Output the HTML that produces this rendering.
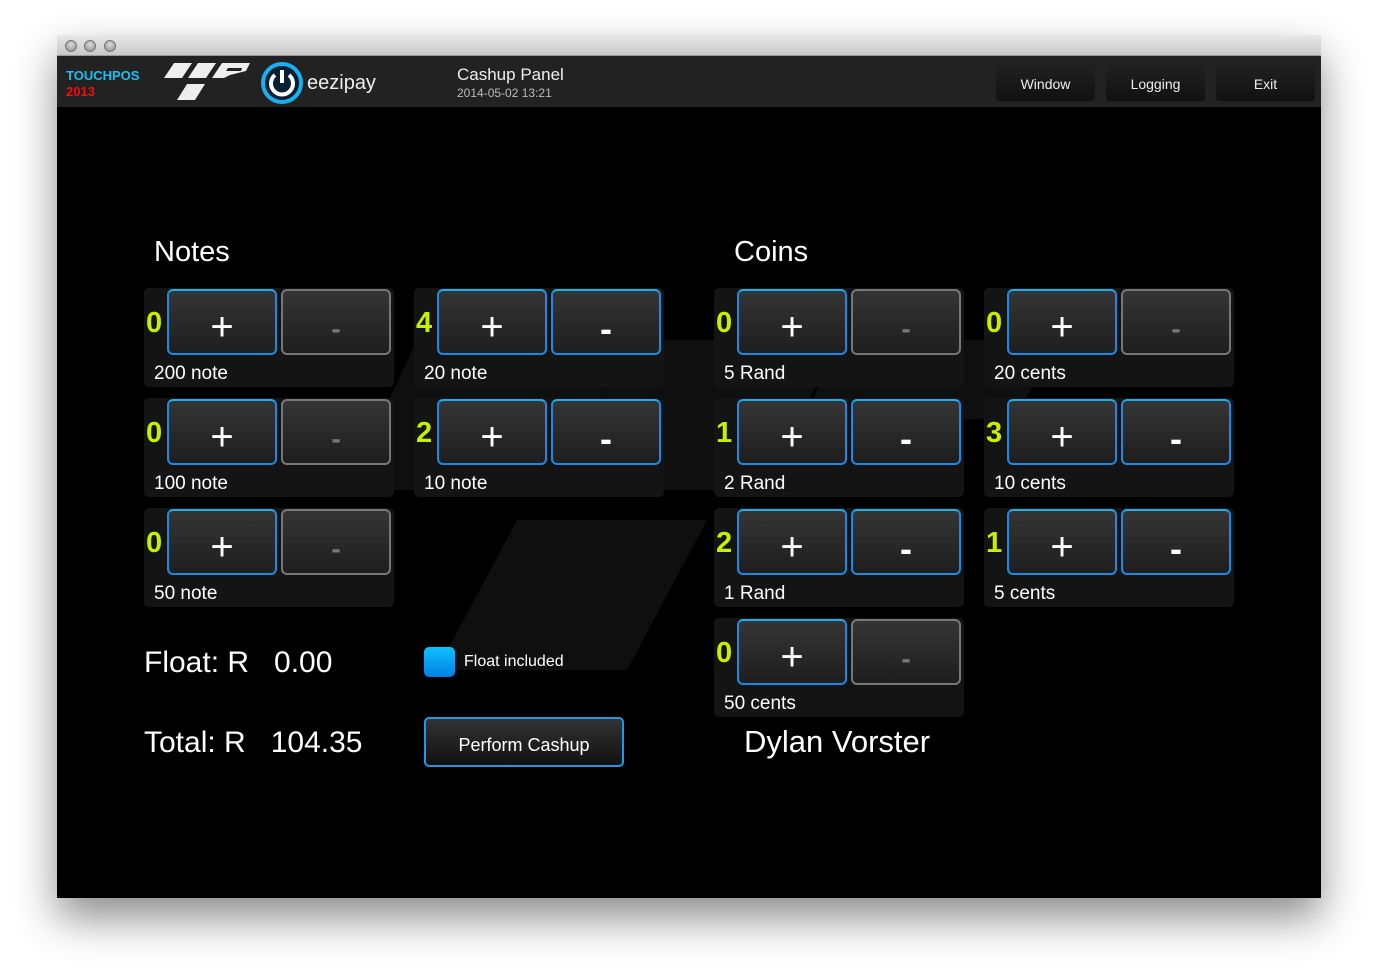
<!DOCTYPE html>
<html><head><meta charset="utf-8"><style>
*{box-sizing:border-box;margin:0;padding:0}
body{width:1378px;height:977px;background:#fff;position:relative;overflow:hidden;font-family:"Liberation Sans",sans-serif;color:#fff}
.win{position:absolute;left:57px;top:35px;width:1264px;height:863px;background:#000;box-shadow:0 20px 40px rgba(0,0,0,.45);overflow:hidden}
.tb{position:absolute;left:0;top:0;width:100%;height:21px;background:linear-gradient(#e8e8e8,#c8c8c8);border-bottom:1px solid #999}
.dot{position:absolute;top:5px;width:12px;height:12px;border-radius:50%;background:radial-gradient(circle at 50% 35%,#ddd,#888);border:1px solid #777}
.hd{position:absolute;left:0;top:21px;width:100%;height:51px;background:#222}
.hb{position:absolute;top:6px;width:99px;height:39px;border-radius:3px;background:linear-gradient(#222,#111);font-size:14px;text-align:center;line-height:45px;color:#eee}
.abs{position:absolute}
.cell{position:absolute;width:250px;height:99px;background:#141414;border-radius:5px}
.num{position:absolute;left:2px;top:19px;font-size:29px;font-weight:bold;color:#c6f000}
.b{position:absolute;top:1px;width:110px;height:66px;border-radius:6px;border:2px solid #1a8ae6;border-top-color:#1ab0f0;background:linear-gradient(#353535,#1e1e1e);text-align:center;color:#fff}
.p{left:23px;font-size:40px;line-height:72px}
.m{left:137px;font-size:36px;line-height:76px;font-weight:bold}
.m.d{border-color:#777;color:#777;font-size:28px}
.lb{position:absolute;left:10px;top:75px;font-size:19px}
</style></head><body>
<div class="win">
<div class="tb"><div class="dot" style="left:8px"></div><div class="dot" style="left:27px"></div><div class="dot" style="left:47px"></div></div>
<div class="hd">
<div class="abs" style="left:9px;top:12px;font-size:13px;font-weight:bold;color:#1ac0f0">TOUCHPOS</div>
<div class="abs" style="left:9px;top:28px;font-size:13px;font-weight:bold;color:#f01010">2013</div>
<svg class="abs" style="left:105px;top:7px" width="90" height="38"><g fill="#eee"><polygon points="12,0 30,0 20,15 2,15"/><polygon points="36,0 54,0 44,15 26,15"/><polygon points="60,0 88,0 84,8 68,12 62,15 50,15"/><polygon points="25,21 43,21 33,37 15,37"/></g><polygon points="66,5 80,5 79,8 64,8" fill="#222"/></svg>
<svg class="abs" style="left:203px;top:5px" width="44" height="44"><circle cx="22" cy="22" r="19" fill="#0a2030" stroke="#1ab0f0" stroke-width="4"/><path d="M15 14 A11 11 0 1 0 29 14" fill="none" stroke="#fff" stroke-width="4"/><line x1="22" y1="9" x2="22" y2="22" stroke="#fff" stroke-width="4"/></svg>
<div class="abs" style="left:250px;top:16px;font-size:20px;color:#eee">eezipay</div>
<div class="abs" style="left:400px;top:9px;font-size:17px;color:#eee">Cashup Panel</div>
<div class="abs" style="left:400px;top:30px;font-size:12px;color:#bbb">2014-05-02 13:21</div>
<div class="hb" style="left:939px">Window</div>
<div class="hb" style="left:1049px">Logging</div>
<div class="hb" style="left:1159px">Exit</div>
</div>
<svg class="abs" style="left:240px;top:300px" width="800" height="340"><g fill="#0f0f0f"><polygon points="120,5 330,5 260,155 50,155"/><polygon points="330,5 540,5 470,155 260,155"/><polygon points="540,5 760,5 720,80 560,95 480,155"/><polygon points="220,185 410,185 330,335 140,335"/></g></svg>
<div class="abs" style="left:97px;top:201px;font-size:29px">Notes</div>
<div class="abs" style="left:677px;top:201px;font-size:29px">Coins</div>

<div class="cell" style="left:87px;top:253px"><div class="num">0</div><div class="b p">+</div><div class="b m d">-</div><div class="lb">200 note</div></div>
<div class="cell" style="left:357px;top:253px"><div class="num">4</div><div class="b p">+</div><div class="b m">-</div><div class="lb">20 note</div></div>
<div class="cell" style="left:87px;top:363px"><div class="num">0</div><div class="b p">+</div><div class="b m d">-</div><div class="lb">100 note</div></div>
<div class="cell" style="left:357px;top:363px"><div class="num">2</div><div class="b p">+</div><div class="b m">-</div><div class="lb">10 note</div></div>
<div class="cell" style="left:87px;top:473px"><div class="num">0</div><div class="b p">+</div><div class="b m d">-</div><div class="lb">50 note</div></div>

<div class="cell" style="left:657px;top:253px"><div class="num">0</div><div class="b p">+</div><div class="b m d">-</div><div class="lb">5 Rand</div></div>
<div class="cell" style="left:927px;top:253px"><div class="num">0</div><div class="b p">+</div><div class="b m d">-</div><div class="lb">20 cents</div></div>
<div class="cell" style="left:657px;top:363px"><div class="num">1</div><div class="b p">+</div><div class="b m">-</div><div class="lb">2 Rand</div></div>
<div class="cell" style="left:927px;top:363px"><div class="num">3</div><div class="b p">+</div><div class="b m">-</div><div class="lb">10 cents</div></div>
<div class="cell" style="left:657px;top:473px"><div class="num">2</div><div class="b p">+</div><div class="b m">-</div><div class="lb">1 Rand</div></div>
<div class="cell" style="left:927px;top:473px"><div class="num">1</div><div class="b p">+</div><div class="b m">-</div><div class="lb">5 cents</div></div>
<div class="cell" style="left:657px;top:583px"><div class="num">0</div><div class="b p">+</div><div class="b m d">-</div><div class="lb">50 cents</div></div>

<div class="abs" style="left:87px;top:611px;font-size:30px">Float: R&nbsp;&nbsp; 0.00</div>
<div class="abs" style="left:87px;top:691px;font-size:30px">Total: R&nbsp;&nbsp; 104.35</div>
<div class="abs" style="left:367px;top:612px;width:31px;height:30px;border-radius:5px;background:linear-gradient(#10c0ff,#0080e0)"></div>
<div class="abs" style="left:407px;top:618px;font-size:16px">Float included</div>
<div class="abs" style="left:367px;top:682px;width:200px;height:50px;border-radius:5px;border:2px solid #1a9ae8;background:linear-gradient(#333,#111);text-align:center;line-height:52px;font-size:18px">Perform Cashup</div>
<div class="abs" style="left:687px;top:689px;font-size:31px">Dylan Vorster</div>
</div>
</body></html>
